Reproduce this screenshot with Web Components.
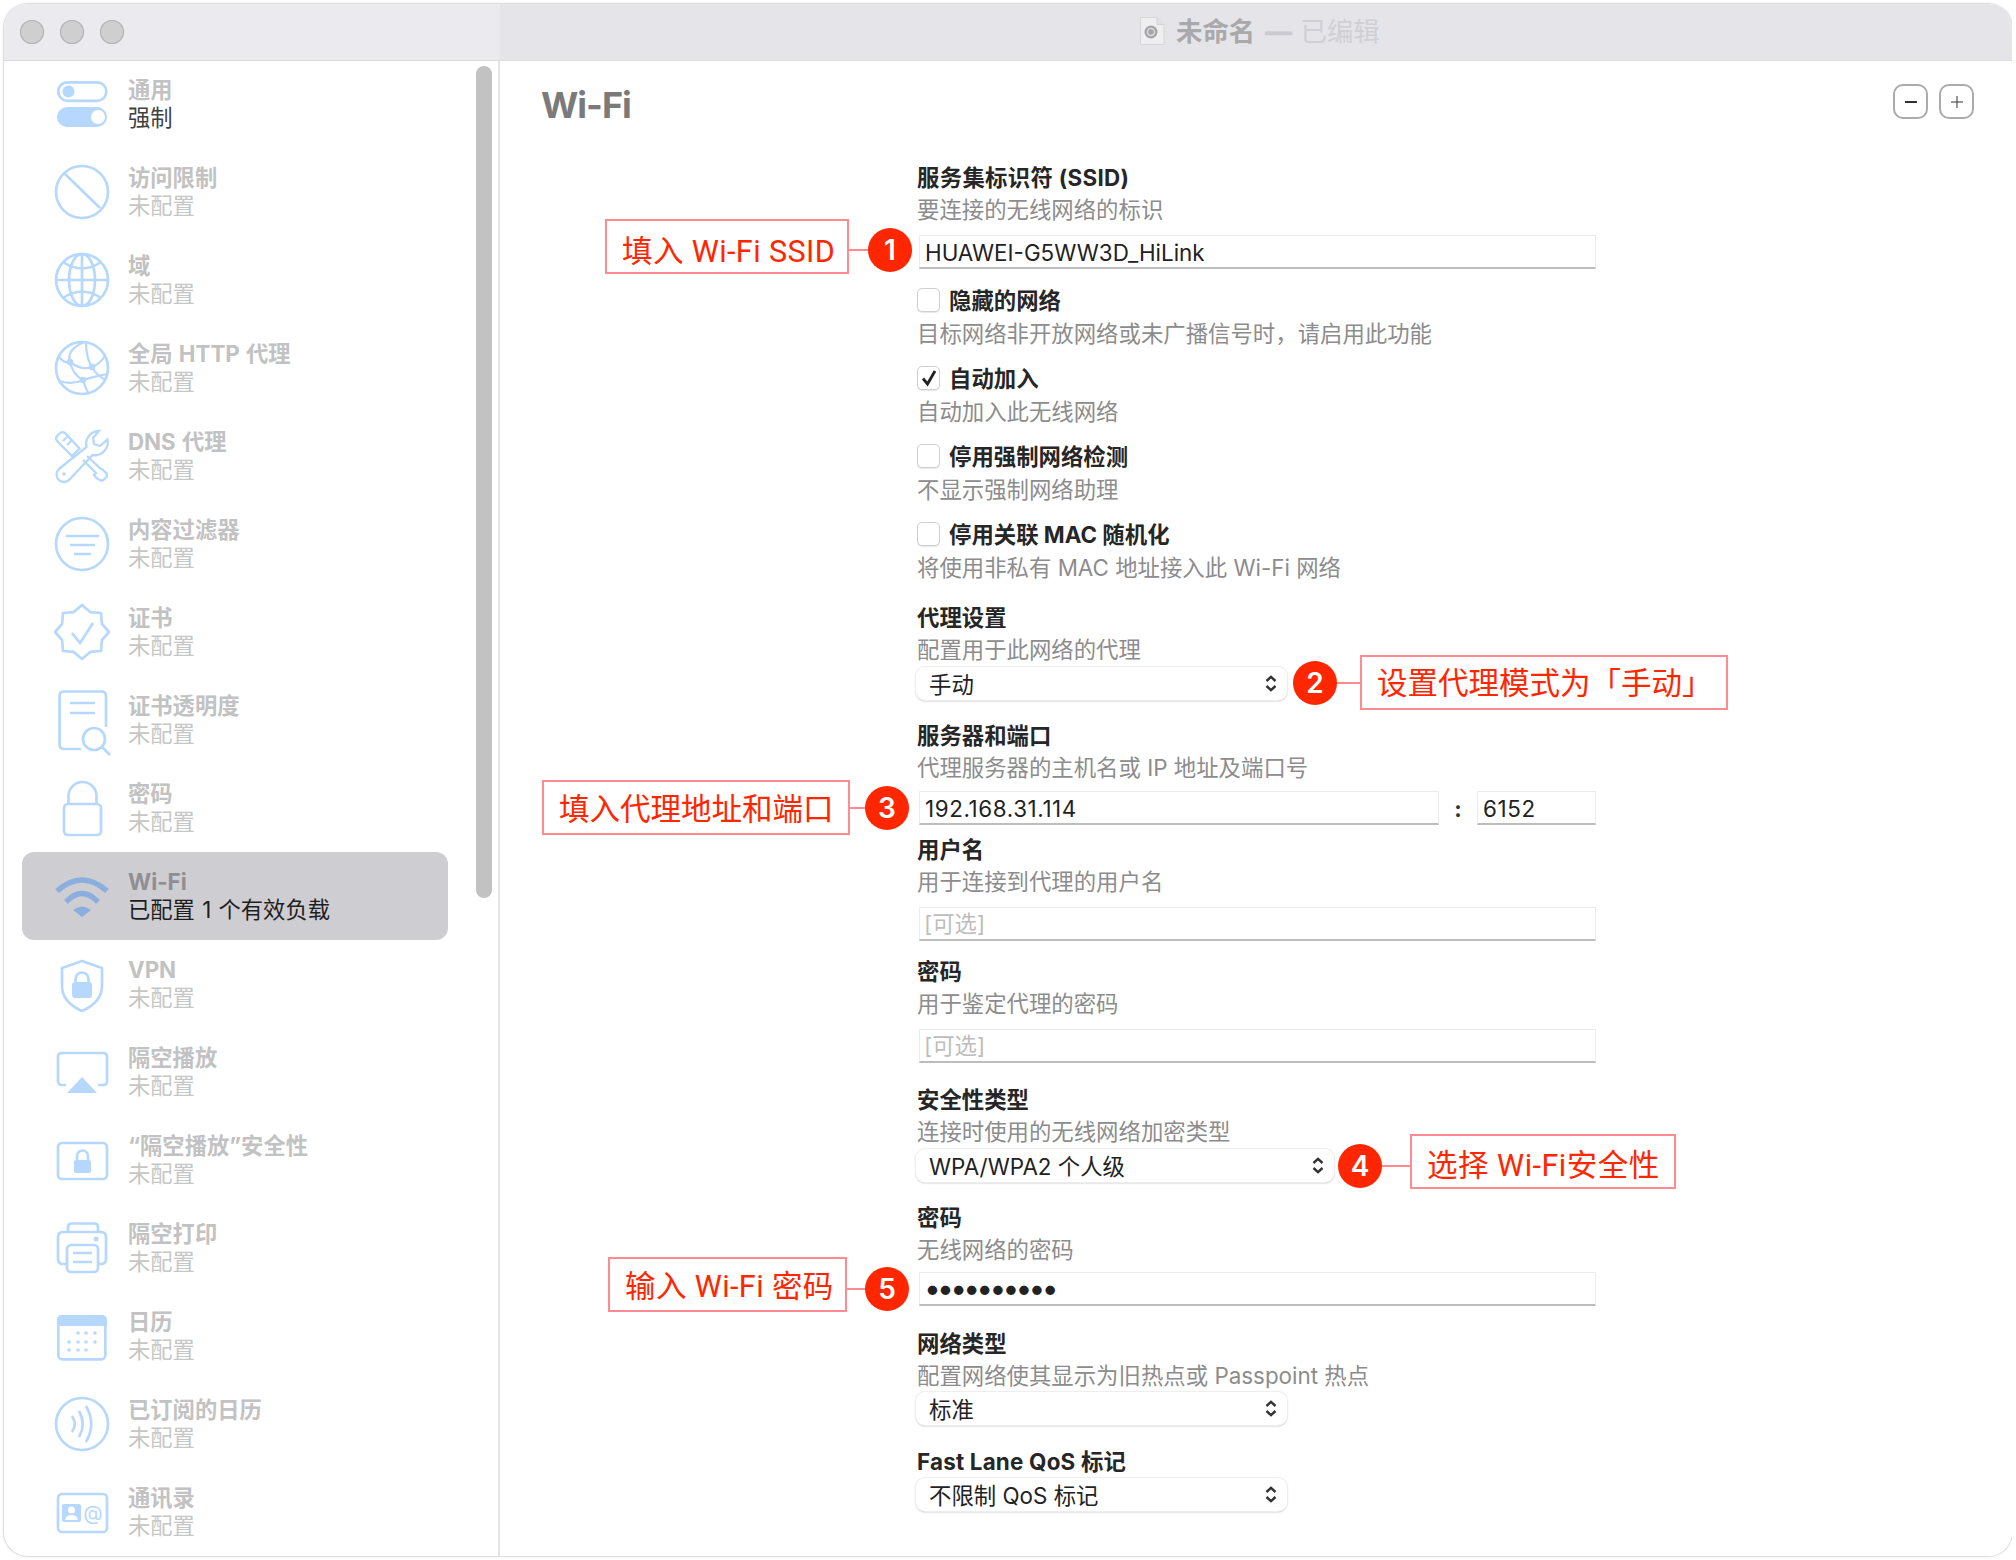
<!DOCTYPE html>
<html lang="zh-CN"><head><meta charset="utf-8"><title>Wi-Fi</title>
<style>
html,body{margin:0;background:#fff}
body{font-family:Inter,"Noto Sans CJK SC",sans-serif;font-size:22.4px;padding:4px 0 4px 4px;width:2008px;height:1552px}
</style></head><body>
<mac-window>
  <span slot="doc">未命名</span><span slot="state">已编辑</span>
  <side-bar slot="side">
    <side-item icon="switch" active>通用<span slot="sub">强制</span></side-item>
    <side-item icon="ban">访问限制<span slot="sub">未配置</span></side-item>
    <side-item icon="globe">域<span slot="sub">未配置</span></side-item>
    <side-item icon="net">全局 HTTP 代理<span slot="sub">未配置</span></side-item>
    <side-item icon="tools">DNS 代理<span slot="sub">未配置</span></side-item>
    <side-item icon="filter">内容过滤器<span slot="sub">未配置</span></side-item>
    <side-item icon="seal">证书<span slot="sub">未配置</span></side-item>
    <side-item icon="docsearch">证书透明度<span slot="sub">未配置</span></side-item>
    <side-item icon="lock">密码<span slot="sub">未配置</span></side-item>
    <side-item icon="wifi" selected>Wi-Fi<span slot="sub">已配置 1 个有效负载</span></side-item>
    <side-item icon="vpn">VPN<span slot="sub">未配置</span></side-item>
    <side-item icon="airplay">隔空播放<span slot="sub">未配置</span></side-item>
    <side-item icon="airlock">“隔空播放”安全性<span slot="sub">未配置</span></side-item>
    <side-item icon="print">隔空打印<span slot="sub">未配置</span></side-item>
    <side-item icon="cal">日历<span slot="sub">未配置</span></side-item>
    <side-item icon="sub">已订阅的日历<span slot="sub">未配置</span></side-item>
    <side-item icon="contact">通讯录<span slot="sub">未配置</span></side-item>
  </side-bar>
  <pane-main slot="main">
    <span slot="title">Wi-Fi</span>

    <form-field style="--top:0px;--gap:9px"><span slot="label" style="letter-spacing:.3px">服务集标识符 (SSID)</span><span slot="desc">要连接的无线网络的标识</span>
      <text-box style="letter-spacing:0">HUAWEI-G5WW3D_HiLink</text-box></form-field>

    <check-row style="--top:15px" ><span slot="label">隐藏的网络</span><span slot="desc">目标网络非开放网络或未广播信号时，请启用此功能</span></check-row>
    <check-row style="--top:12px" checked><span slot="label">自动加入</span><span slot="desc">自动加入此无线网络</span></check-row>
    <check-row style="--top:12px"><span slot="label">停用强制网络检测</span><span slot="desc">不显示强制网络助理</span></check-row>
    <check-row style="--top:12px"><span slot="label">停用关联 MAC 随机化</span><span slot="desc">将使用非私有 MAC 地址接入此 Wi-Fi 网络</span></check-row>

    <form-field style="--top:18px;--gap:1px"><span slot="label">代理设置</span><span slot="desc">配置用于此网络的代理</span>
      <select-box style="width:371px">手动</select-box></form-field>

    <form-field style="--top:20px;--gap:7px"><span slot="label">服务器和端口</span><span slot="desc">代理服务器的主机名或 IP 地址及端口号</span>
      <host-port><text-box style="width:520px;flex:none">192.168.31.114</text-box><b>:</b><text-box style="width:119px;flex:none">6152</text-box></host-port></form-field>

    <form-field style="--top:9px;--gap:9px"><span slot="label">用户名</span><span slot="desc">用于连接到代理的用户名</span>
      <text-box hint>[可选]</text-box></form-field>

    <form-field style="--top:15px;--gap:9px"><span slot="label">密码</span><span slot="desc">用于鉴定代理的密码</span>
      <text-box hint>[可选]</text-box></form-field>

    <form-field style="--top:21px;--gap:1px"><span slot="label">安全性类型</span><span slot="desc">连接时使用的无线网络加密类型</span>
      <select-box style="width:418px">WPA/WPA2 个人级</select-box></form-field>

    <form-field style="--top:20px;--gap:6px"><span slot="label">密码</span><span slot="desc">无线网络的密码</span>
      <text-box dots>••••••••••</text-box></form-field>

    <form-field style="--top:22px;--gap:0px"><span slot="label">网络类型</span><span slot="desc">配置网络使其显示为旧热点或 Passpoint 热点</span>
      <select-box style="width:371px">标准</select-box></form-field>

    <form-field style="--top:21px;--gap:0px"><span slot="label" style="letter-spacing:.2px">Fast Lane QoS 标记</span>
      <select-box style="width:371px">不限制 QoS 标记</select-box></form-field>

    <call-out slot="over" n="1" style="left:105px;top:159px;--box:244px;--line:19px;--pad:15px;--lh:61px;--dy:3px;--ls:.4px">填入 Wi-Fi SSID</call-out>
    <call-out slot="over" n="2" flip style="left:793px;top:595px;--box:368px;--line:23px;--pad:15px;--lh:54px;--dy:0px">设置代理模式为「手动」</call-out>
    <call-out slot="over" n="3" style="left:42px;top:720px;--box:308px;--line:15px;--pad:15px;--lh:56px;--dy:0px">填入代理地址和端口</call-out>
    <call-out slot="over" n="4" flip style="left:838px;top:1074px;--box:266px;--line:28px;--pad:15px;--lh:59px;--dy:4px;--ls:.5px">选择 Wi-Fi安全性</call-out>
    <call-out slot="over" n="5" style="left:108px;top:1197px;--box:239px;--line:18px;--pad:15px;--lh:56px;--dy:4px;--ls:.4px">输入 Wi-Fi 密码</call-out>
  </pane-main>
</mac-window>

<script>
const ICONS={
switch:`<rect x="6.3" y="8.3" width="48" height="18.5" rx="9.25" fill="none"/><circle cx="16.5" cy="17.5" r="6" class="f"/><rect x="5" y="33" width="50" height="20" rx="10" class="f"/><circle cx="46" cy="43" r="7" fill="#fff" stroke="none"/>`,
ban:`<circle cx="30" cy="30" r="26"/><path d="M13 12L48 46"/>`,
globe:`<circle cx="30" cy="30" r="26"/><ellipse cx="30" cy="30" rx="13" ry="26"/><path d="M30 4V56M4 30H56M11 12Q30 25 49 12M11 48Q30 35 49 48"/>`,
net:`<circle cx="30" cy="30" r="26"/><path stroke-width="2.2" d="M32 4Q14 12 18 24Q21 37 31 42Q33 50 37 56M34 4Q34 20 40 29Q45 38 54 42M7 19Q13 26 18 24Q30 33 40 29Q48 26 53 18M7 43Q20 47 31 42Q44 38 55 36"/><g class="f"><circle cx="18" cy="24" r="3.2"/><circle cx="40" cy="29" r="3.2"/><circle cx="31" cy="42" r="3.2"/></g>`,
tools:`<g stroke-width="2.3"><path d="M13 7Q10 5 7.500 7.500L5 10Q3 13 5.500 15.500L20 30L27.500 22.500ZM11 15L15 11M15 19L19 15M31 34L44 47L42 49Q44 52 47 53.500Q50 56 52.500 53L54.500 51Q56 48 53 46Q51 43 49 43L35 30"/><path d="M47 5A13 13 0 0 0 34.500 21L7.500 42.500A7.500 7.500 0 1 0 18 53L40.500 29A13 13 0 0 0 55.500 13.500L48 20L42 18L41 12Z"/></g><circle cx="12" cy="48" r="1.800" class="f"/>`,
filter:`<circle cx="30" cy="30" r="26"/><path d="M14 22H47M18 31H43M22 40H39"/>`,
seal:`<path stroke-linejoin="round" d="M30 3L38.200 10.100L49 11L49.900 21.800L57 30L49.900 38.200L49 49L38.200 49.900L30 57L21.800 49.900L11 49L10.100 38.200L3 30L10.100 21.800L11 11L21.800 10.100Z"/><path d="M20 31L28 41L41 21"/>`,
docsearch:`<path d="M54 37V6Q54 1.500 49.500 1.500H12Q7.500 1.500 7.500 6V54Q7.500 59 12 59H29"/><path d="M18 13H43M18 23H43"/><circle cx="42" cy="49" r="11"/><path d="M50 57L58 65"/>`,
lock:`<rect x="12" y="26" width="37" height="31" rx="4"/><path d="M16.500 26V18A14 14 0 0 1 44.500 18V26"/>`,
wifi:`<g stroke-width="5.500"><path d="M5 25Q30 3 55 25M14 36Q30 19 46 36"/></g><path class="f" d="M21 44Q30 37 39 44L30 51Z"/>`,
vpn:`<path stroke-linejoin="round" d="M30 7L50 14V32Q50 48 30 57Q10 48 10 32V14Z"/><rect x="20" y="28" width="20" height="16" rx="3" class="f"/><path d="M23.500 28V25A6.500 6.500 0 0 1 36.500 25V28"/>`,
airplay:`<path d="M14 43H10Q6 43 6 39V15Q6 11 10 11H51Q55 11 55 15V39Q55 43 51 43H46"/><path class="f" d="M30 35L45 51H15Z"/>`,
airlock:`<rect x="6" y="13" width="49" height="36" rx="4"/><rect x="22" y="30" width="17" height="13" rx="2" class="f"/><path d="M25 30V26A5.500 5.500 0 0 1 36 26V30"/>`,
print:`<path d="M16 13V9Q16 5.500 20 5.500H42Q46 5.500 46 9V13M15 46H11Q6 46 6 41V19Q6 14 11 14H49Q54 14 54 19V41Q54 46 49 46H46"/><rect x="15" y="27" width="31" height="27" rx="4"/><path d="M21 35H40M21 44H40"/><circle cx="44" cy="21" r="2.500" class="f"/>`,
cal:`<rect x="6.300" y="10.300" width="47" height="43" rx="4"/><path class="f" d="M5 20V14Q5 9 10 9H50Q55 9 55 14V20Z"/><g class="f"><circle cx="26" cy="27" r="1.800"/><circle cx="34" cy="27" r="1.800"/><circle cx="43" cy="27" r="1.800"/><circle cx="17" cy="36" r="1.800"/><circle cx="26" cy="36" r="1.800"/><circle cx="34" cy="36" r="1.800"/><circle cx="43" cy="36" r="1.800"/><circle cx="17" cy="44" r="1.800"/><circle cx="26" cy="44" r="1.800"/><circle cx="34" cy="44" r="1.800"/></g>`,
sub:`<circle cx="30" cy="30" r="26"/><path stroke-linecap="round" d="M20.500 23Q25 30 20.500 37M27.500 18Q34 30 27.500 42M34.500 13Q44 30 34.500 47"/>`,
contact:`<rect x="6" y="12" width="49" height="38" rx="4"/><rect x="10" y="22" width="19" height="18" rx="2" class="f"/><circle cx="19.500" cy="28" r="3.500" fill="#fff" stroke="none"/><path fill="#fff" stroke="none" d="M13 38Q14 33 19.500 33Q25 33 26 38Z"/><text x="41" y="37.500" text-anchor="middle" font-size="20" class="f" font-family="Inter,sans-serif">@</text>`
};
const define=(name,css,html)=>{
  class C extends HTMLElement{
    constructor(){super();const r=this.attachShadow({mode:'open'});r.innerHTML=`<style>${css}</style>${typeof html==='function'?html(this):html}`;}
  }
  customElements.define(name,C);
};
define('mac-window',`
:host{display:grid;grid-template-rows:57px 1fr;width:2008px;height:1552px;border-radius:24px;overflow:hidden;background:#fff;box-shadow:0 0 0 1px #dedee0,0 0 3px 1px rgba(0,0,0,.08)}
.tb{display:grid;grid-template-columns:496px 1fr;border-bottom:2px solid #dcdcde;box-sizing:border-box;position:relative;z-index:1}
.l{background:#ebeaef;display:flex;gap:16px;padding:16px;align-items:flex-start}
.l i{width:24px;height:24px;border-radius:50%;background:#cfced1;box-shadow:inset 0 0 0 1px #aeadb0}
.r{background:#e5e4e9;display:flex;align-items:center;font-size:26.400px;line-height:40px;padding:0 0 2px 638px;color:#d0d0d4}
.r svg{margin-right:10px;flex:none}
.doc{font-weight:700;color:#a9a9ab}
.dash{margin:0 9px 0 10px;color:#cbcbcf;font-weight:700;-webkit-text-stroke:.6px #cbcbcf}
.body{display:grid;grid-template-columns:496px 1fr;min-height:0;margin-top:-1px}
`,`<div class="tb"><div class="l"><i></i><i></i><i></i></div><div class="r">
<svg width="28" height="30" viewBox="0 0 28 30"><path d="M2.500 1.500H19L26 8.500V28.500H2.500Z" fill="#efeff2" stroke="#d6d6da"/><path d="M19 1.500V8.500H26" fill="#e0e0e4" stroke="#d6d6da"/><circle cx="13" cy="16" r="6.500" fill="#a3a3a8"/><circle cx="13" cy="16" r="3.500" fill="none" stroke="#dcdce0" stroke-width="1.500"/></svg>
<span class="doc"><slot name="doc"></slot></span><span class="dash">—</span><span><slot name="state"></slot></span></div></div>
<div class="body"><slot name="side"></slot><slot name="main"></slot></div>`);
define('side-bar',`
:host{display:block;position:relative;border-right:2px solid #e4e4e8;overflow:hidden}
.s{position:absolute;right:6px;top:6px;width:16px;height:832px;border-radius:8px;background:#c2c2c2}
`,`<slot></slot><div class="s"></div>`);
define('side-item',`
:host{display:flex;align-items:center;height:88px;width:426px;margin-left:18px;padding-left:30px;box-sizing:border-box;border-radius:12px;gap:16px;--ic:#b6d8ff;color:#c2c2c2}
:host([selected]){background:#cecdd2;--ic:#8aaede;color:#8f8f93}
svg{flex:none;overflow:visible;fill:none;stroke:var(--ic);stroke-width:2.700}
svg .f{fill:var(--ic);stroke:none}
.t{line-height:28px;font-size:22.300px;white-space:nowrap;word-spacing:1px}
.a{font-weight:700}
.b{color:#c6c6c6}
:host([active]) .b{color:#404040}
:host([selected]) .b{color:#1e1e1e}
`,h=>`<svg width="60" height="60" viewBox="0 0 60 60">${ICONS[h.getAttribute('icon')]}</svg><div class="t"><div class="a"><slot></slot></div><div class="b"><slot name="sub"></slot></div></div>`);
define('pane-main',`
:host{display:block;position:relative;background:#fff;overflow:hidden}
header{display:flex;justify-content:space-between;align-items:flex-start;padding:23px 38px 0 41px;height:44px}
h1{margin:0;font-size:36px;line-height:44px;font-weight:700;color:#7a7a7a;letter-spacing:-1px}
.btns{display:flex;gap:11px;margin-top:1px}
.btns span{width:35px;height:35px;box-sizing:border-box;border:2px solid #ababab;border-radius:10px;display:flex;align-items:center;justify-content:center}
.form{margin:35px 0 0 417px;width:679px;display:flex;flex-direction:column}
`,`<header><h1><slot name="title"></slot></h1><div class="btns">
<span><svg width="12" height="12"><path d="M0 6H12" stroke="#333" stroke-width="2"/></svg></span>
<span><svg width="12" height="12"><path d="M0 6H12M6 0V12" stroke="#333" stroke-width="1"/></svg></span></div></header>
<div class="form"><slot></slot></div><slot name="over"></slot>`);
define('form-field',`
:host{display:block;margin-top:var(--top,0);color:#222}
.l{font-weight:700;line-height:32px;color:#262626}
.d{line-height:32px;color:#8c8c8c}
.c{margin-top:var(--gap,9px)}
`,h=>`<div class="l"><slot name="label"></slot></div>${h.querySelector('[slot=desc]')?'<div class="d"><slot name="desc"></slot></div>':''}<div class="c"><slot></slot></div>`);
define('check-row',`
:host{display:block;margin-top:var(--top,0)}
.r{display:flex;align-items:center;gap:9px;height:32px;font-weight:700;color:#262626}
.r>span:last-child{padding-bottom:3px}
.b{width:23px;height:24px;box-sizing:border-box;border:1px solid #cfcfcf;border-radius:5px;background:#fff;box-shadow:0 1px 1px rgba(0,0,0,.1);display:flex;align-items:center;justify-content:center}
.b svg{display:none}
:host([checked]) .b svg{display:block}
.d{line-height:32px;margin-top:2px;color:#8c8c8c}
`,`<div class="r"><span class="b"><svg width="18" height="18" viewBox="0 0 18 18"><path d="M3 9.500L7.500 15L15 2" fill="none" stroke="#222" stroke-width="2.800"/></svg></span><span><slot name="label"></slot></span></div><div class="d"><slot name="desc"></slot></div>`);
define('text-box',`
:host{display:block;box-sizing:border-box;height:34px;margin-left:2px;border:1px solid #ececec;border-bottom:2px solid #bdbdbd;background:#fff;padding-left:5px;line-height:33px;color:#222;font-size:22.400px;white-space:nowrap;letter-spacing:.6px}
:host([hint]){color:#bdbdbd;letter-spacing:0;padding-left:4px;line-height:32px}
:host([dots]){font-size:30px;letter-spacing:-3.800px;padding-left:4px;line-height:30px;color:#222}
`,`<slot></slot>`);
define('host-port',`
:host{display:flex;align-items:center;width:679px}
::slotted(b){flex:none;width:38px;margin-right:-2px;text-align:center;color:#333;font-weight:700}
`,`<slot></slot>`);
define('select-box',`
:host{display:flex;align-items:center;justify-content:space-between;box-sizing:border-box;height:33px;padding:0 10px 2px 13px;margin-left:-1px;border-radius:9px;background:#fff;box-shadow:0 0 0 1px #eeeeee,0 1px 2px rgba(0,0,0,.35);color:#222;font-size:22.400px;white-space:nowrap}
svg{position:relative;top:1px}
`,`<span><slot></slot></span><svg width="12" height="17" viewBox="0 0 12 17"><path d="M1.500 6L6 1.800L10.500 6M1.500 11L6 15.200L10.500 11" fill="none" stroke="#333" stroke-width="2.400"/></svg>`);
define('call-out',`
:host{position:absolute;display:flex;align-items:center}
:host([flip]){flex-direction:row-reverse}
.box{box-sizing:border-box;width:var(--box);height:55px;border:2px solid #ff8a90;background:#fff;padding-left:var(--pad);font-family:Roboto,"Noto Sans CJK SC",sans-serif;font-size:30.500px;line-height:var(--lh);letter-spacing:var(--ls,0);color:#ff2600;white-space:nowrap}
.ln,.n{position:relative;top:var(--dy)}
.ln{width:var(--line);height:2px;background:#ff8a90}
.n{width:44px;height:44px;border-radius:50%;background:#ff2600;color:#fff;font-size:28px;font-weight:600;letter-spacing:0;display:flex;align-items:center;justify-content:center}
`,h=>`<div class="box"><span><slot></slot></span></div><div class="ln"></div><div class="n">${h.getAttribute('n')}</div>`);
</script>
</body></html>
